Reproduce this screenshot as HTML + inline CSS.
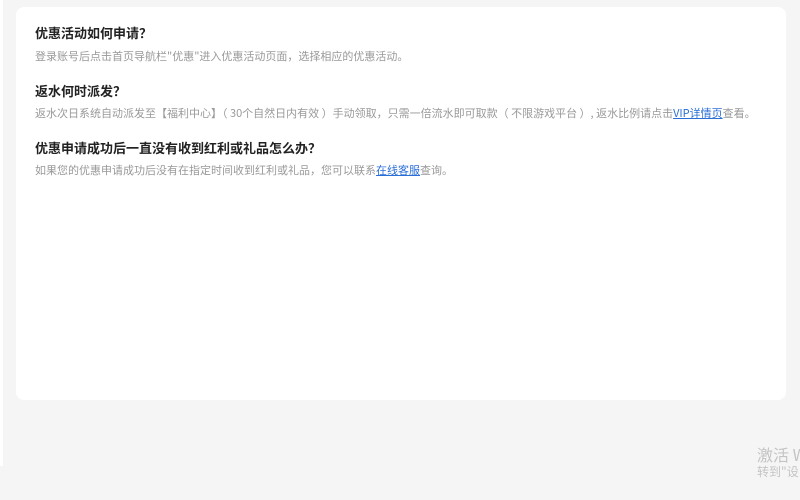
<!DOCTYPE html>
<html><head><meta charset="utf-8"><style>
html,body{margin:0;padding:0;width:800px;height:500px;overflow:hidden;background:#f5f5f5;font-family:"Noto Sans CJK SC","Liberation Sans",sans-serif;position:relative}
.side{position:absolute;left:0;top:0;width:3px;height:466px;background:#fff}
.card{position:absolute;left:16px;top:7px;width:770px;height:393px;background:#fff;border-radius:8px}
h3{position:absolute;left:35px;margin:0;font-size:13px;font-weight:bold;color:#222;line-height:16px;white-space:nowrap}
p{position:absolute;left:35px;margin:0;font-size:11px;color:#999;line-height:14px;white-space:nowrap}
a{color:#2b6fd6;text-decoration:underline}
.wm1{position:absolute;left:757px;top:442px;font-size:16px;color:#c4c4c4;white-space:nowrap}
.wm2{position:absolute;left:757px;top:463px;font-size:12px;color:#c4c4c4;white-space:nowrap}
</style></head><body>
<div class="side"></div>
<div class="card"></div>
<h3 style="top:25px">优惠活动如何申请？</h3>
<p style="top:49px">登录账号后点击首页导航栏"优惠"进入优惠活动页面，选择相应的优惠活动。</p>
<h3 style="top:83px">返水何时派发？</h3>
<p style="top:106px">返水次日系统自动派发至【福利中心】（ 30个自然日内有效 ）手动领取，只需一倍流水即可取款（ 不限游戏平台 ）, 返水比例请点击<a>VIP详情页</a>查看。</p>
<h3 style="top:140px">优惠申请成功后一直没有收到红利或礼品怎么办？</h3>
<p style="top:163px">如果您的优惠申请成功后没有在指定时间收到红利或礼品，您可以联系<a>在线客服</a>查询。</p>
<div class="wm1">激活 W</div>
<div class="wm2">转到"设</div>
</body></html>
